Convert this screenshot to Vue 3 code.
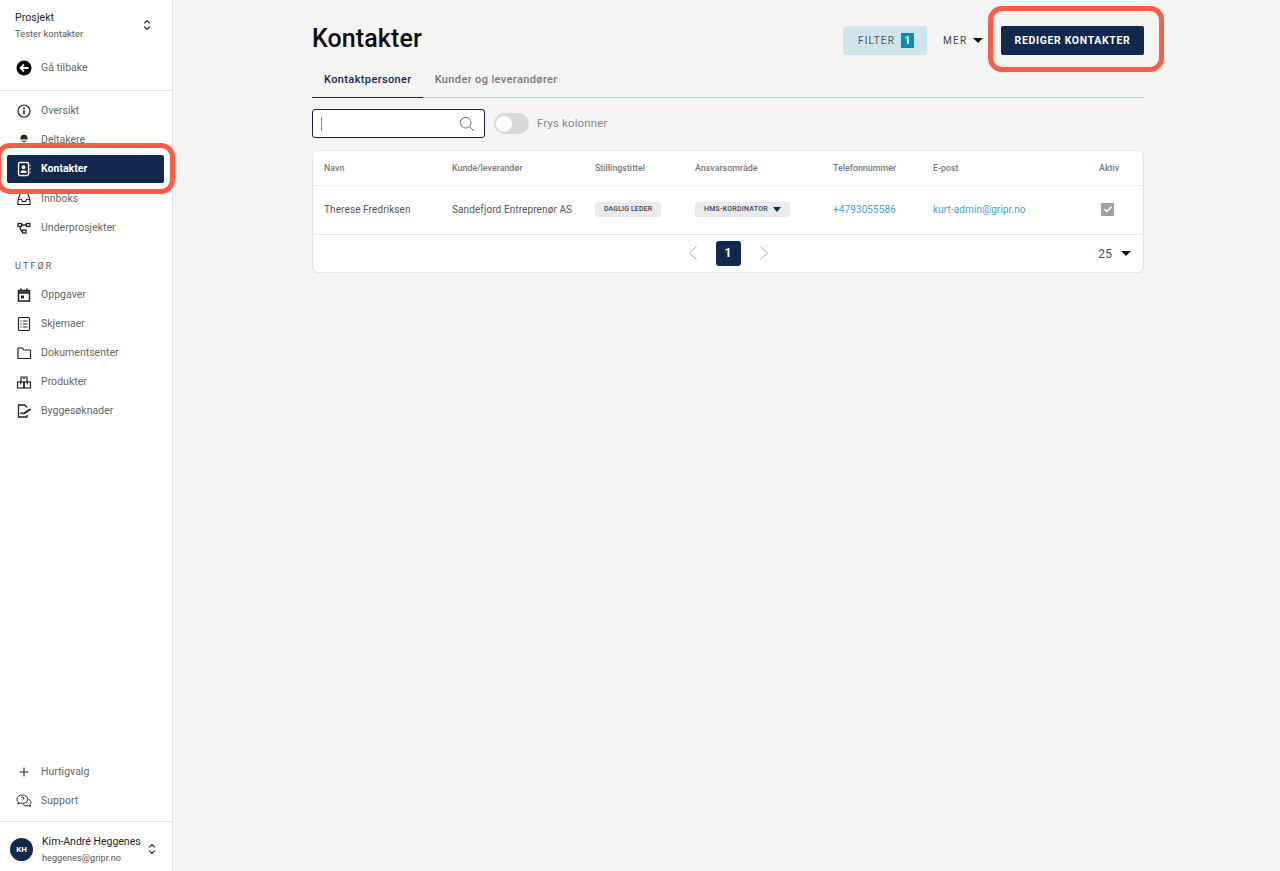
<template>
  <div class="app">
    <aside class="sidebar">
      <div class="project">
        <div>
          <div class="project-label">Prosjekt</div>
          <div class="project-name">Tester kontakter</div>
        </div>
        <svg class="updown" viewBox="0 0 10 14" width="8" height="12"><path d="M1.5 5 5 1.5 8.5 5M1.5 9 5 12.5 8.5 9" /></svg>
      </div>
      <a class="nav-item back">
        <svg class="icon" viewBox="0 0 16 16" width="16" height="16"><circle cx="8" cy="8" r="7.5" fill="#000" /><path d="M12.5 8H4.5M8 4.5 4.5 8 8 11.5" fill="none" stroke="#fff" stroke-width="1.8" /></svg>
        <span>Gå tilbake</span>
      </a>
      <div class="divider"></div>
      <nav class="group first">
        <a v-for="item in topItems" :key="item.text" class="nav-item" :class="{ active: item.active }">
          <svg class="icon line" viewBox="0 0 16 16" width="16" height="16" v-html="item.icon"></svg>
          <span>{{ item.text }}</span>
        </a>
      </nav>
      <div class="section-label">UTFØR</div>
      <nav class="group">
        <a v-for="item in doItems" :key="item.text" class="nav-item">
          <svg class="icon line" viewBox="0 0 16 16" width="16" height="16" v-html="item.icon"></svg>
          <span>{{ item.text }}</span>
        </a>
      </nav>
      <nav class="group bottom">
        <a v-for="item in bottomItems" :key="item.text" class="nav-item">
          <svg class="icon line" viewBox="0 0 16 16" width="16" height="16" v-html="item.icon"></svg>
          <span>{{ item.text }}</span>
        </a>
      </nav>
      <div class="user">
        <div class="avatar">KH</div>
        <div class="user-text">
          <div class="user-name">Kim-André Heggenes</div>
          <div class="user-mail">heggenes@gripr.no</div>
        </div>
        <svg class="updown" viewBox="0 0 10 14" width="8" height="12"><path d="M1.5 5 5 1.5 8.5 5M1.5 9 5 12.5 8.5 9" /></svg>
      </div>
      <div class="mark mark-side"></div>
    </aside>

    <main class="main">
      <header class="head">
        <h1>Kontakter</h1>
        <div class="actions">
          <button class="btn-filter">FILTER <span class="count">1</span></button>
          <button class="btn-more">MER <i class="caret"></i></button>
          <button class="btn-primary">REDIGER KONTAKTER</button>
          <div class="mark mark-top"></div>
        </div>
      </header>

      <div class="tabs">
        <div class="tab on">Kontaktpersoner</div>
        <div class="tab">Kunder og leverandører</div>
      </div>

      <div class="tools">
        <div class="search">
          <span class="cursor"></span>
          <svg viewBox="0 0 18 18" width="16" height="16"><circle cx="7.5" cy="7.5" r="6" /><path d="m12 12 5 5" /></svg>
        </div>
        <div class="toggle"><span></span></div>
        <span class="toggle-label">Frys kolonner</span>
      </div>

      <section class="card">
        <div class="row header">
          <div v-for="col in columns" :key="col">{{ col }}</div>
        </div>
        <div class="row body">
          <div>Therese Fredriksen</div>
          <div>Sandefjord Entreprenør AS</div>
          <div><span class="tag">DAGLIG LEDER</span></div>
          <div><span class="tag select">HMS-KORDINATOR <i class="caret small"></i></span></div>
          <div class="link">+4793055586</div>
          <div class="link">kurt-admin@gripr.no</div>
          <div>
            <span class="check">
              <svg viewBox="0 0 12 12" width="12" height="12"><path d="m2.5 6.2 2.4 2.3 4.6-4.6" /></svg>
            </span>
          </div>
        </div>
        <div class="pager">
          <svg class="chev" viewBox="0 0 10 16" width="10" height="16"><path d="M8.5 1.5 1.5 8l7 6.5" /></svg>
          <span class="page">1</span>
          <svg class="chev" viewBox="0 0 10 16" width="10" height="16"><path d="M1.5 1.5 8.5 8l-7 6.5" /></svg>
          <div class="per-page">25 <i class="caret"></i></div>
        </div>
      </section>
    </main>
  </div>
</template>

<script setup>
const dark = "#222";
const topItems = [
  { text: "Oversikt", icon: '<circle cx="8" cy="8" r="6" stroke-width="1.2" /><path d="M8 7.2v4M8 4.6v1.4" stroke-width="1.6" />' },
  { text: "Deltakere", icon: `<path d="M4.8 6.2a3.2 3.2 0 0 1 6.4 0z" fill="${dark}" /><path d="M4.5 7h7" /><path d="M5.8 8.2a2.3 2.3 0 0 0 4.4 0" /><path d="M4.5 14c0-1.8 1.300-2.600 3.500-2.600s3.500.8 3.500 2.600z" fill="${dark}" />` },
  { text: "Kontakter", active: true, icon: '<rect x="2.5" y="1.5" width="10" height="13" rx="1.5" stroke="#fff" stroke-width="1.3" /><circle cx="7.5" cy="6.2" r="1.9" fill="#fff" stroke="none" /><path d="M4.3 12c0-2 1.400-2.700 3.200-2.700s3.200.7 3.200 2.700z" fill="#fff" stroke="none" /><path d="M14 3.500v2M14 7v2M14 10.500v2" stroke="#f5a8a0" stroke-width="1.2" />' },
  { text: "Innboks", icon: '<path d="M4 3 2 9v4.500h12V9l-2-6" stroke-width="1.2" /><path d="M2 8.500h3.500l1 2h3l1-2H14" stroke-width="1.2" />' },
  { text: "Underprosjekter", icon: '<g stroke-width="1.3"><rect x="2" y="3.5" width="3.5" height="3" /><rect x="10.5" y="3.5" width="3.5" height="3" /><rect x="6.5" y="10" width="3.5" height="3" /><path d="M5.500 5h5M4 6.500c0 2.500 1 4.500 2.500 5" /></g>' },
];
const doItems = [
  { text: "Oppgaver", icon: '<rect x="2.5" y="3.5" width="11" height="10.5" stroke-width="1.5" /><path d="M2.500 5.500h11" stroke-width="2.4" /><path d="M5 1.500v2M11 1.500v2" stroke-width="1.5" /><rect x="5" y="8.5" width="3" height="3" fill="#222" stroke="none" />' },
  { text: "Skjemaer", icon: '<rect x="2.5" y="1.5" width="11" height="13" rx="1" stroke-width="1.2" /><path d="M7 5h4.500M7 8h4.500M7 11h4.500M4.300 5h1.400M4.300 8h1.400M4.300 11h1.400" stroke-width="1.2" />' },
  { text: "Dokumentsenter", icon: '<path d="M2 13.500V3h4.500l1.500 2h6.500v8.500z" stroke-width="1.2" />' },
  { text: "Produkter", icon: '<g stroke-width="1.2"><rect x="1.5" y="8" width="6.2" height="6" /><rect x="8.3" y="8" width="6.2" height="6" /><path d="M5 8V3h6v5M4.600 8v2.500M11.400 8v2.500M8 3v2" /></g>' },
  { text: "Byggesøknader", icon: '<path d="M11 4.500 8.800 2H2.500v12h8.500v-2" stroke-width="1.3" /><path d="M4.500 11c1-1.800 1.800-1.800 2.300-.6.400.9 1 .7 1.700 0" stroke-width="1.2" /><path d="M8 10.500 14.500 6" stroke-width="2" />' },
];
const bottomItems = [
  { text: "Hurtigvalg", icon: '<path d="M8 3.500v9M3.500 8h9" />' },
  { text: "Support", icon: '<path d="M6.500 2C3.500 2 1 3.800 1 6.300c0 1.200.6 2.200 1.500 3L2 11l2.300-1c.7.2 1.400.3 2.200.3 3 0 5.300-1.800 5.300-4S9.500 2 6.500 2z" /><path d="M12.500 6.500c1.500.5 2.500 1.700 2.500 3 0 .9-.4 1.600-1 2.200l.4 1.800-2-.8c-1.800.5-4.200 0-5.200-1.500" /><path d="M5 5c.3-1.200 3-1.200 3 .2 0 1-1.500 1-1.500 2" />' },
];
const columns = ["Navn", "Kunde/leverandør", "Stillingstittel", "Ansvarsområde", "Telefonnummer", "E-post", "Aktiv"];
</script>

<style>
html,
body {
  margin: 0;
  background: #f4f4f3;
}
</style>

<style scoped>
.app {
  display: flex;
  height: 871px;
  overflow: hidden;
  font-family: Roboto, "Liberation Sans", sans-serif;
  color: #1b1b1b;
  background: #f4f4f3;
}

/* sidebar */
.sidebar {
  position: relative;
  display: flex;
  flex-direction: column;
  flex: 0 0 173px;
  width: 173px;
  box-sizing: border-box;
  background: #fff;
  border-right: 1px solid #dde3ec;
}

.project {
  display: flex;
  align-items: center;
  justify-content: space-between;
  height: 45px;
  padding: 5px 21px 0 15px;
  box-sizing: border-box;
}

.project-label {
  font-size: 10.5px;
  line-height: 14px;
  color: #222;
  letter-spacing: 0.1px;
}

.project-name {
  margin-top: 3px;
  font-size: 9.3px;
  line-height: 12px;
  letter-spacing: 0.05px;
  color: #555;
}

.updown {
  flex: none;
  fill: none;
  stroke: #222;
  stroke-width: 1.5;
}

.nav-item {
  display: flex;
  align-items: center;
  gap: 9px;
  height: 29px;
  margin: 0 8px;
  padding-left: 8px;
  border-radius: 2px;
  font-size: 10.5px;
  letter-spacing: 0.02px;
  color: #666;
}

.nav-item.back {
  margin-top: 8px;
}

.divider {
  margin-top: 8px;
  height: 1px;
  background: #dde3ec;
}

.group.first {
  margin-top: 5px;
}

.nav-item.active {
  position: relative;
  height: 27px;
  margin: 1px 8px 1px 7px;
  padding-left: 9px;
  padding-bottom: 1px;
  color: #fff;
  font-weight: 700;
  background: #12284c;
}

.icon {
  flex: none;
}

.line {
  fill: none;
  stroke: #222;
  stroke-width: 1;
}

.section-label {
  margin-top: 18px;
  margin-bottom: 8px;
  padding-left: 15px;
  font-size: 9px;
  line-height: 12px;
  letter-spacing: 2.1px;
  color: #555;
}

.group.bottom {
  margin-top: auto;
  padding-bottom: 6px;
}

.user {
  display: flex;
  align-items: center;
  height: 44px;
  padding: 5px 16px 0 10px;
  border-top: 1px solid #dde3ec;
}

.avatar {
  display: flex;
  align-items: center;
  justify-content: center;
  flex: none;
  width: 23px;
  height: 23px;
  border-radius: 50%;
  font-size: 8px;
  font-weight: 700;
  color: #fff;
  background: #12284c;
}

.user-text {
  flex: 1;
  min-width: 0;
  margin-left: 9px;
  white-space: nowrap;
}

.user-name {
  font-size: 10.5px;
  line-height: 14px;
  color: #222;
}

.user-mail {
  margin-top: 3px;
  font-size: 9.1px;
  line-height: 12px;
  letter-spacing: 0.05px;
  color: #555;
}

/* red highlight frames */
.mark {
  position: absolute;
  box-sizing: border-box;
  border: 5px solid #ff5c45;
  border-radius: 14px;
  pointer-events: none;
}

.mark-side {
  left: -4px;
  top: 143px;
  width: 179px;
  height: 51px;
}

.mark-top {
  right: -20px;
  top: -20px;
  width: 176px;
  height: 66px;
}

/* main */
.main {
  flex: 1;
  min-width: 0;
  padding: 0 136px 0 139px;
}

.head {
  display: flex;
  align-items: flex-start;
  justify-content: space-between;
  height: 61px;
}

h1 {
  margin: 23px 0 0;
  font-size: 25px;
  line-height: 32px;
  font-weight: 500;
  letter-spacing: 0.1px;
  color: #0c0c0c;
}

.actions {
  position: relative;
  display: flex;
  align-items: center;
  margin-top: 26px;
}

button {
  height: 29px;
  border: none;
  border-radius: 2px;
  font-family: inherit;
  font-size: 10.5px;
}

.btn-filter {
  display: flex;
  align-items: center;
  gap: 6px;
  width: 84px;
  padding: 0 0 0 15px;
  font-size: 10px;
  letter-spacing: 1.15px;
  color: #555;
  background: #cfe4ea;
}

.count {
  width: 13px;
  height: 15px;
  font-size: 11px;
  line-height: 15px;
  font-weight: 700;
  letter-spacing: 0;
  text-align: center;
  color: #fff;
  background: #0a8bb0;
}

.btn-more {
  display: flex;
  align-items: center;
  gap: 6px;
  width: 74px;
  padding: 0 0 0 16px;
  font-size: 10px;
  letter-spacing: 1.3px;
  color: #444;
  background: none;
}

.btn-primary {
  width: 143px;
  padding: 0;
  font-weight: 700;
  letter-spacing: 0.65px;
  color: #fff;
  background: #12284c;
}

.caret {
  display: inline-block;
  width: 0;
  height: 0;
  border-left: 5px solid transparent;
  border-right: 5px solid transparent;
  border-top: 5px solid #111;
}

.tabs {
  display: flex;
  height: 36px;
  border-bottom: 1px solid #b9cde6;
}

.tab {
  padding: 7px 12px 0;
  font-size: 11px;
  line-height: 24px;
  font-weight: 500;
  letter-spacing: 0.38px;
  color: #777;
}

.tab.on {
  margin-bottom: -1px;
  padding-right: 11px;
  color: #12284c;
  border-bottom: 1px solid #12284c;
}

.tools {
  display: flex;
  align-items: center;
  margin-top: 11px;
  height: 29px;
}

.search {
  display: flex;
  align-items: center;
  justify-content: space-between;
  box-sizing: border-box;
  width: 173px;
  height: 29px;
  padding: 0 9px 0 8px;
  border: 1.5px solid #12203a;
  border-radius: 3px;
  background: #fff;
}

.cursor {
  width: 1px;
  height: 14px;
  background: #888;
}

.search svg {
  fill: none;
  stroke: #666;
  stroke-width: 1.1;
}

.toggle {
  display: flex;
  align-items: center;
  width: 35px;
  height: 21px;
  margin-left: 9px;
  padding-left: 2px;
  box-sizing: border-box;
  border-radius: 11px;
  background: #d8d8d8;
}

.toggle span {
  width: 16px;
  height: 16px;
  border-radius: 50%;
  background: #fff;
}

.toggle-label {
  margin: 0 0 1px 8px;
  font-size: 11.5px;
  letter-spacing: 0.12px;
  color: #8a8a8a;
}

.card {
  box-sizing: border-box;
  height: 123px;
  margin-top: 12px;
  border: 1px solid #dfe5ee;
  border-radius: 6px;
  background: #fff;
}

.row {
  display: grid;
  grid-template-columns: 128px 143px 100px 138px 100px 166px 1fr;
  align-items: center;
  padding-left: 11px;
}

.row.header {
  height: 34px;
  font-size: 8.9px;
  font-weight: 500;
  color: #777;
  border-bottom: 1px solid #eceff3;
}

.row.body {
  height: 47px;
  padding-bottom: 1px;
  font-size: 10px;
  letter-spacing: 0.1px;
  color: #555;
  border-bottom: 1px solid #dfe5ee;
}

.row.body > div {
  display: flex;
  align-items: center;
}

.tag {
  display: inline-block;
  height: 15px;
  padding: 0 9px;
  border-radius: 2px;
  font-size: 7px;
  line-height: 15px;
  font-weight: 500;
  letter-spacing: 0.12px;
  white-space: nowrap;
  color: #444;
  background: #e8eaef;
}

.tag.select {
  display: inline-flex;
  align-items: center;
  gap: 5px;
  width: 95px;
  box-sizing: border-box;
  letter-spacing: 0.25px;
}

.caret.small {
  flex: none;
  border-left-width: 4.5px;
  border-right-width: 4.5px;
  border-top: 5px solid #12284c;
}

.link {
  color: #4a9ae0;
}

.check {
  display: flex;
  align-items: center;
  justify-content: center;
  width: 13px;
  height: 13px;
  margin: -1px 0 0 2px;
  border-radius: 1px;
  background: #a0a0a0;
}

.check svg {
  fill: none;
  stroke: #fff;
  stroke-width: 1.6;
}

.pager {
  position: relative;
  display: flex;
  align-items: center;
  justify-content: center;
  gap: 18px;
  height: 36px;
}

.chev {
  fill: none;
  stroke: #aaa;
  stroke-width: 1;
}

.page {
  width: 25px;
  height: 25px;
  border-radius: 3px;
  font-size: 12px;
  line-height: 25px;
  font-weight: 700;
  text-align: center;
  color: #fff;
  background: #12284c;
}

.per-page {
  position: absolute;
  right: 12px;
  top: 11px;
  display: flex;
  align-items: center;
  gap: 9px;
  font-size: 12.5px;
  line-height: 15px;
  color: #555;
}
</style>
